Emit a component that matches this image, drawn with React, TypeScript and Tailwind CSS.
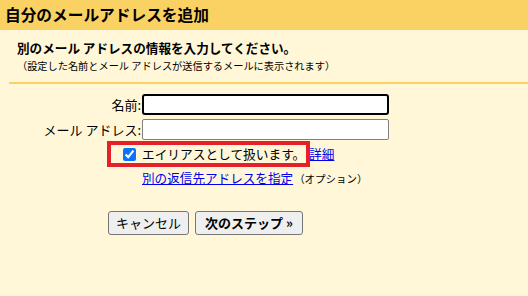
import React from "react";

export default function App() {
  const font = { fontFamily: '"Noto Sans CJK JP", "Noto Sans", sans-serif' };
  return (
    <div className="w-[528px] h-[296px] bg-[#fff7d8] text-black overflow-hidden" style={font}>
      <div className="h-[30px] bg-[#f9d263] pl-[5px] text-[15.7px] font-bold leading-[30px]">
        自分のメールアドレスを追加
      </div>
      <div className="ml-[9px] border-b-2 border-[#f9d263] pl-[8px] pt-[9px] pb-[7px]">
        <div className="text-[12.6px] font-bold leading-[18px] whitespace-nowrap">別のメール アドレスの情報を入力してください。</div>
        <div className="text-[10.2px] leading-[18px] whitespace-nowrap">（設定した名前とメール アドレスが送信するメールに表示されます）</div>
      </div>
      <div className="mt-[10px] grid grid-cols-[142px_247px] gap-y-[4px] items-center text-[13px]">
        <div className="text-right pr-[1px] leading-[20px]">名前:</div>
        <div className="h-[21px] border-2 border-black rounded-[3px] bg-white"></div>
        <div className="text-right pr-[1px] leading-[20px]">メール アドレス:</div>
        <div className="h-[21px] border border-[#808080] rounded-[2px] bg-white"></div>
        <div className="relative h-[26px] -mt-[3px]">
          <div className="absolute left-[107px] top-0 w-[203px] h-[26px] border-[4px] border-[#e5202a]"></div>
          <input
            type="checkbox"
            defaultChecked
            className="absolute left-[123px] top-[7px] w-[13px] h-[13px] accent-[#0b74ff] m-0"
          />
        </div>
        <div className="h-[26px] -mt-[3px] flex items-center leading-[26px] whitespace-nowrap">
          <span className="w-[167px] text-[12.7px]">エイリアスとして扱います。</span>
          <a className="text-[#0000ee] underline text-[12.7px]">詳細</a>
        </div>
        <div></div>
        <div className="leading-[18px] -mt-[2px] whitespace-nowrap">
          <a className="text-[#0000ee] underline text-[12.6px]">別の返信先アドレスを指定</a>
          <span className="text-[10.5px] ml-[1px]">（オプション）</span>
        </div>
      </div>
      <div className="mt-[23px] ml-[108px] flex gap-[6px] text-[13px]">
        <button className="h-[24px] px-[7px] bg-[#efefef] border border-[#767676] rounded-[3px] leading-[20px]">キャンセル</button>
        <button className="h-[24px] px-[9px] bg-[#efefef] border border-[#767676] rounded-[3px] leading-[20px] font-bold">次のステップ »</button>
      </div>
    </div>
  );
}
